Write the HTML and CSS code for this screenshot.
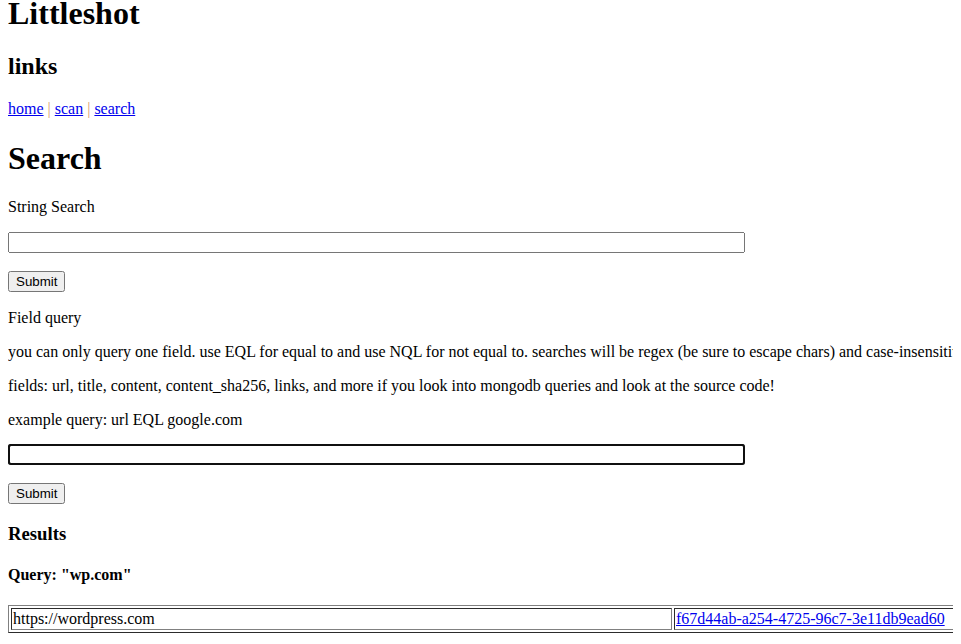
FILE: index.html
```html
<!DOCTYPE html>
<html>
<head>
<meta charset="utf-8">
<title>Littleshot</title>
<link rel="stylesheet" href="styles.css">
</head>
<body>
<h1 class="title">Littleshot</h1>
<h2>links</h2>
<p><a href="#">home</a> <span class="sep">|</span> <a href="#">scan</a> <span class="sep">|</span> <a href="#">search</a></p>
<h1>Search</h1>
<p>String Search</p>
<form class="search-form">
  <p class="input-row"><input type="text" class="query-input" name="q"></p>
  <p class="button-row"><button type="button" class="submit">Submit</button></p>
</form>
<p>Field query</p>
<p class="nowrap">you can only query one field. use EQL for equal to and use NQL for not equal to. searches will be regex (be sure to escape chars) and case-insensitive</p>
<p>fields: url, title, content, content_sha256, links, and more if you look into mongodb queries and look at the source code!</p>
<p>example query: url EQL google.com</p>
<form class="search-form tight">
  <p class="input-row"><input type="text" class="query-input focused" name="fq"></p>
  <p class="button-row"><button type="button" class="submit">Submit</button></p>
</form>
<h3>Results</h3>
<h4>Query: "wp.com"</h4>
<div class="results-wrap">
<table class="results">
  <tr>
    <td class="url-cell">https://wordpress.com</td>
    <td class="id-cell"><a href="#">f67d44ab-a254-4725-96c7-3e11db9ead60</a></td>
  </tr>
</table>
</div>
</body>
</html>
```
FILE: styles.css
```css
html {
  background: #fff;
}
body {
  margin: 0 8px 8px 8px;
  font-family: "Liberation Serif", "Times New Roman", serif;
  font-size: 16px;
  color: #000;
  background: #fff;
}
.title {
  margin-top: -5px;
}
a {
  color: #0000ee;
}
.sep {
  color: #d9a06a;
}
.search-form {
  margin: 0;
}
.input-row {
  padding-bottom: 2px;
}
.button-row {
  padding-bottom: 1px;
}
.tight {
  margin-top: -1px;
}
.tight .button-row {
  padding-bottom: 0;
}
.query-input {
  width: 729px;
  font-family: "Liberation Sans", Arial, sans-serif;
  font-size: 13.333px;
}
.focused {
  outline: 2px solid #101010;
  outline-offset: -2px;
  border-radius: 3px;
}
.submit {
  font-family: "Liberation Sans", Arial, sans-serif;
  font-size: 13.333px;
}
.nowrap {
  white-space: nowrap;
}
.results-wrap {
  width: 1112px;
}
.results {
  width: 100%;
  border: 1px outset #808080;
  border-spacing: 2px;
}
.results td {
  border: 1px inset #808080;
  padding: 1px;
}
.url-cell {
  width: 657px;
}
```
